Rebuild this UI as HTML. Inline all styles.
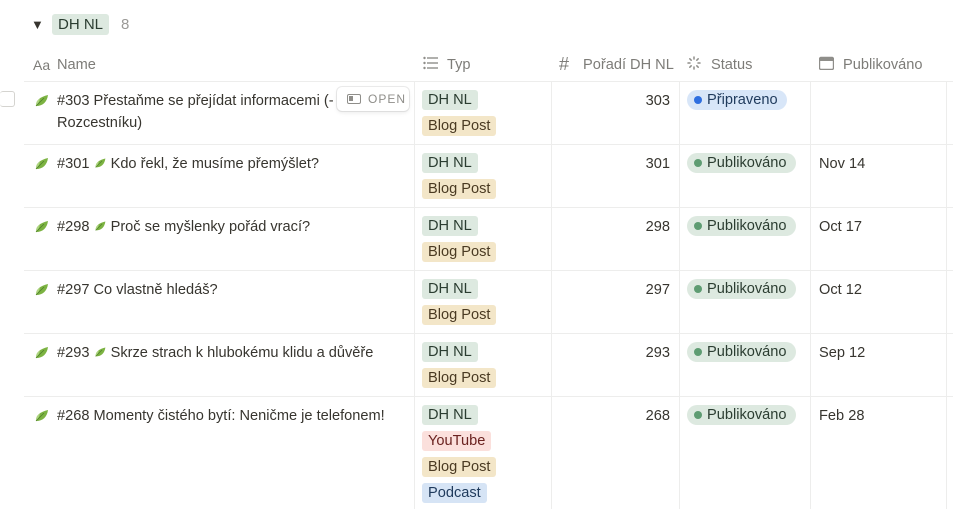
<!DOCTYPE html><html><head><meta charset="utf-8"><style>
*{margin:0;padding:0;box-sizing:border-box}
body{width:953px;height:509px;background:#fff;font-family:"Liberation Sans",sans-serif;color:#37352f;font-size:14.6px;position:relative;overflow:hidden}
.a{position:absolute;white-space:nowrap}
.h{color:#7d7c78;font-size:14.6px;top:57px}
.hl{position:absolute;height:1px;background:#ededec;left:24px;width:929px}
.vl{position:absolute;width:1px;background:#ededec;top:81px;height:428px}
.tag{position:absolute;height:20px;line-height:20px;padding:0 6px;border-radius:3px;font-size:14.6px;left:422px}
.g{background:#dde9e0;color:#2b3d31}.y{background:#f3e6c8;color:#4a3a22}.r{background:#fbe0dc;color:#6b2320}.b{background:#d6e4f5;color:#1f3a5c}
.st{position:absolute;left:687px;height:20px;line-height:20px;padding:0 9px 0 20px;border-radius:10px;font-size:14.6px}
.st:before{content:"";position:absolute;left:7px;top:6px;width:8px;height:8px;border-radius:50%}
.sg{background:#dde9e0;color:#2b3d31}.sg:before{background:#5e9c72}
.sb{background:#d8e6f8;color:#1f3a5c}.sb:before{background:#2f6fe0}
.num{position:absolute;right:283px;text-align:right}
.dt{position:absolute;left:819px}
.lf{position:absolute;left:34px;width:16px;height:16px}
</style></head><body>
<div class="a" style="left:31px;top:17px;font-size:13px">▼</div>
<div class="a" style="left:52px;top:14px;height:21px;line-height:21px;padding:0 6px;background:#dde9e0;color:#2b3d31;border-radius:3px;font-size:15px">DH NL</div>
<div class="a" style="left:121px;top:16px;color:#9b9a97;font-size:15px">8</div>

<div class="a h" style="left:33px;font-size:14px">Aa</div><div class="a h" style="left:57px">Name</div>
<svg class="a" style="left:423px;top:56px" width="15" height="14" viewBox="0 0 15 14" fill="#8f8e8a"><circle cx="1.5" cy="2" r="1.2"/><circle cx="1.5" cy="7" r="1.2"/><circle cx="1.5" cy="12" r="1.2"/><rect x="4" y="1.3" width="11" height="1.4"/><rect x="4" y="6.3" width="11" height="1.4"/><rect x="4" y="11.3" width="11" height="1.4"/></svg>
<div class="a h" style="left:447px">Typ</div>
<div class="a h" style="left:559px;font-size:18px;top:54px">#</div><div class="a h" style="left:583px">Pořadí DH NL</div>
<svg class="a" style="left:687px;top:56px" width="14" height="14" viewBox="0 0 14 14" stroke="#8f8e8a" stroke-width="1.5" stroke-linecap="round"><path d="M7 1v2M7 11v2M1 7h2M11 7h2M2.8 2.8l1.4 1.4M9.8 9.8l1.4 1.4M2.8 11.2l1.4-1.4M9.8 4.2l1.4-1.4"/></svg>
<div class="a h" style="left:711px">Status</div>
<svg class="a" style="left:819px;top:56px" width="15" height="14" viewBox="0 0 15 14"><rect x="0.5" y="1.5" width="14" height="12" rx="1.5" fill="none" stroke="#8f8e8a" stroke-width="1.4"/><rect x="0.5" y="1.5" width="14" height="3.5" fill="#8f8e8a"/></svg>
<div class="a h" style="left:843px">Publikováno</div>

<div class="hl" style="top:81px"></div><div class="hl" style="top:144px"></div><div class="hl" style="top:207px"></div><div class="hl" style="top:270px"></div><div class="hl" style="top:333px"></div><div class="hl" style="top:396px"></div>
<div class="vl" style="left:414px"></div><div class="vl" style="left:551px"></div><div class="vl" style="left:679px"></div><div class="vl" style="left:810px"></div><div class="vl" style="left:946px"></div>

<svg width="0" height="0" style="position:absolute"><defs><symbol id="leaf" viewBox="0 0 16 16"><path d="M2 14C2 8 6 5 14 3c-1 7-5 11-12 11z" fill="#7cb342"/><path d="M2 14C2 10 3 8 6 7c-1 3-2 5-4 7z" fill="#aed581"/><path d="M2 14l8-8" stroke="#4e7d2a" stroke-width="0.8"/></symbol></defs></svg>

<div class="a" style="left:0;top:91px;width:15px;height:16px;border:1px solid #d5d4d0;border-radius:3px;border-left:none"></div>
<svg class="lf" style="top:92px"><use href="#leaf"/></svg>
<div class="a" style="left:57px;top:93px">#303 Přestaňme se přejídat informacemi (-</div>
<div class="a" style="left:57px;top:115px">Rozcestníku)</div>
<div class="a" style="left:337px;top:87px;width:72px;height:24px;background:#fff;border-radius:5px;box-shadow:0 0 0 1px rgba(15,15,15,.08),0 2px 4px rgba(15,15,15,.08);font-size:12px;color:#8f8e8a;letter-spacing:1px;line-height:24px;padding-left:31px">OPEN</div>
<div class="a" style="left:347px;top:94px;width:14px;height:10px;border:1.3px solid #8f8e8a;border-radius:2px"><div style="position:absolute;left:1px;top:1px;width:4px;height:5px;background:#8f8e8a"></div></div>
<div class="tag g" style="top:90px">DH NL</div><div class="tag y" style="top:116px">Blog Post</div>
<div class="num" style="top:93px">303</div>
<div class="st sb" style="top:90px">Připraveno</div>

<svg class="lf" style="top:155px"><use href="#leaf"/></svg>
<div class="a" style="left:57px;top:156px">#301 <svg width="13" height="13" style="vertical-align:-1px"><use href="#leaf"/></svg> Kdo řekl, že musíme přemýšlet?</div>
<div class="tag g" style="top:153px">DH NL</div><div class="tag y" style="top:179px">Blog Post</div>
<div class="num" style="top:156px">301</div><div class="st sg" style="top:153px">Publikováno</div><div class="dt" style="top:156px">Nov 14</div>

<svg class="lf" style="top:218px"><use href="#leaf"/></svg>
<div class="a" style="left:57px;top:219px">#298 <svg width="13" height="13" style="vertical-align:-1px"><use href="#leaf"/></svg> Proč se myšlenky pořád vrací?</div>
<div class="tag g" style="top:216px">DH NL</div><div class="tag y" style="top:242px">Blog Post</div>
<div class="num" style="top:219px">298</div><div class="st sg" style="top:216px">Publikováno</div><div class="dt" style="top:219px">Oct 17</div>

<svg class="lf" style="top:281px"><use href="#leaf"/></svg>
<div class="a" style="left:57px;top:282px">#297 Co vlastně hledáš?</div>
<div class="tag g" style="top:279px">DH NL</div><div class="tag y" style="top:305px">Blog Post</div>
<div class="num" style="top:282px">297</div><div class="st sg" style="top:279px">Publikováno</div><div class="dt" style="top:282px">Oct 12</div>

<svg class="lf" style="top:344px"><use href="#leaf"/></svg>
<div class="a" style="left:57px;top:345px">#293 <svg width="13" height="13" style="vertical-align:-1px"><use href="#leaf"/></svg> Skrze strach k hlubokému klidu a důvěře</div>
<div class="tag g" style="top:342px">DH NL</div><div class="tag y" style="top:368px">Blog Post</div>
<div class="num" style="top:345px">293</div><div class="st sg" style="top:342px">Publikováno</div><div class="dt" style="top:345px">Sep 12</div>

<svg class="lf" style="top:407px"><use href="#leaf"/></svg>
<div class="a" style="left:57px;top:408px">#268 Momenty čistého bytí: Neničme je telefonem!</div>
<div class="tag g" style="top:405px">DH NL</div><div class="tag r" style="top:431px">YouTube</div><div class="tag y" style="top:457px">Blog Post</div><div class="tag b" style="top:483px">Podcast</div>
<div class="num" style="top:408px">268</div><div class="st sg" style="top:405px">Publikováno</div><div class="dt" style="top:408px">Feb 28</div>
</body></html>
